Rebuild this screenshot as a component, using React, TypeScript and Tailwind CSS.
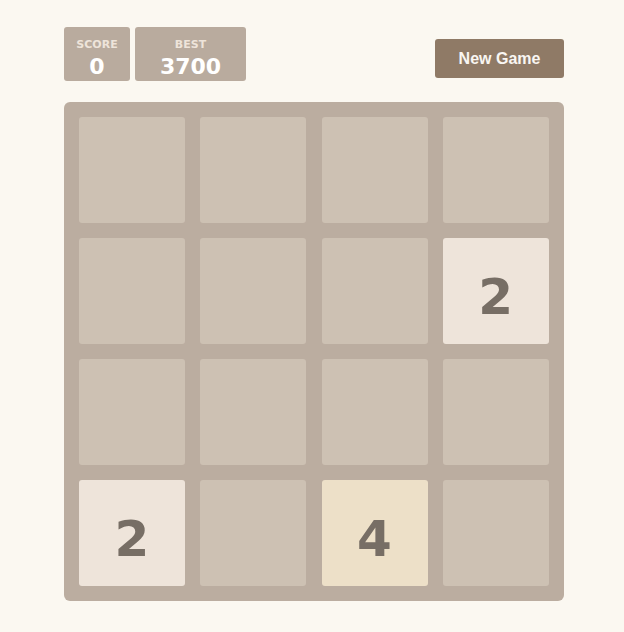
const board = [
  [0, 0, 0, 0],
  [0, 0, 0, 2],
  [0, 0, 0, 0],
  [2, 0, 4, 0],
];

function Tile({ value }: { value: number }) {
  if (!value) {
    return <div className="h-[106px] w-[106px] rounded-[3px] bg-[#cdc1b3]" />;
  }
  const bg = value === 2 ? "bg-[#eee4da]" : "bg-[#ede0c8]";
  return (
    <div
      className={`flex h-[106px] w-[106px] items-center justify-center rounded-[3px] ${bg} pt-[11px] text-[50px] font-bold leading-none text-[#776e65]`}
    >
      {value}
    </div>
  );
}

export default function App() {
  return (
    <div className="min-h-[632px] bg-[#fbf8f1] pt-[27px] font-['DejaVu_Sans',sans-serif]">
      <div className="ml-[64px] w-[500px]">
        <div className="flex items-start justify-between">
          <div className="flex gap-[5px]">
            <div className="flex h-[54px] w-[66px] flex-col items-center rounded-[3px] bg-[#b9ab9e] pt-[12px]">
              <span className="text-[11px] font-bold leading-none text-[#eee4da]">SCORE</span>
              <span className="mt-[6px] text-[22px] font-bold leading-none text-white">0</span>
            </div>
            <div className="flex h-[54px] w-[111px] flex-col items-center rounded-[3px] bg-[#b9ab9e] pt-[12px]">
              <span className="text-[11px] font-bold leading-none text-[#eee4da]">BEST</span>
              <span className="mt-[6px] text-[22px] font-bold leading-none text-white">3700</span>
            </div>
          </div>
          <button className="mt-[12px] h-[39px] w-[129px] rounded-[3px] bg-[#8f7a66] font-['Liberation_Sans',sans-serif] text-[16px] font-bold text-[#f9f6f2]">
            New Game
          </button>
        </div>
        <div className="mt-[21px] grid grid-cols-4 gap-[15px] rounded-[6px] bg-[#bbada0] p-[15px]">
          {board.flat().map((v, i) => (
            <Tile key={i} value={v} />
          ))}
        </div>
      </div>
    </div>
  );
}
